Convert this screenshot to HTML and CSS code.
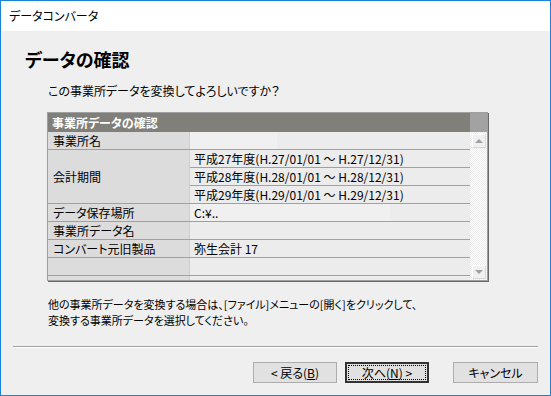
FILE: index.html
```html
<!DOCTYPE html>
<html lang="ja">
<head>
  <meta charset="UTF-8">
  <title>データコンバータ</title>
  <link rel="stylesheet" href="styles.css">
</head>
<body>
  <div class="window">
    <div class="titlebar">データコンバータ</div>

    <div class="content">
      <h1 class="page-title">データの確認</h1>
      <p class="prompt">この事業所データを変換してよろしいですか？</p>

      <div class="data-box">
        <div class="grid">
          <div class="grid-head">事業所データの確認</div>

          <div class="row">
            <div class="label">事業所名</div>
            <div class="value"><span class="edit-blank short"></span></div>
          </div>

          <div class="row group">
            <div class="label">会計期間</div>
            <div class="values">
              <div class="value">平成27年度(H.27/01/01 ～ H.27/12/31)</div>
              <div class="value">平成28年度(H.28/01/01 ～ H.28/12/31)</div>
              <div class="value">平成29年度(H.29/01/01 ～ H.29/12/31)</div>
            </div>
          </div>

          <div class="row">
            <div class="label">データ保存場所</div>
            <div class="value"><span class="edit-text">C:¥..</span></div>
          </div>

          <div class="row">
            <div class="label">事業所データ名</div>
            <div class="value"></div>
          </div>

          <div class="row">
            <div class="label">コンバート元旧製品</div>
            <div class="value">弥生会計 17</div>
          </div>

          <div class="row">
            <div class="label"></div>
            <div class="value"></div>
          </div>

          <div class="row tail">
            <div class="label"></div>
            <div class="value"></div>
          </div>
        </div>

        <div class="scrollbar">
          <div class="scroll-head"></div>
          <div class="scroll-track">
            <div class="scroll-btn"><span class="arrow up"></span></div>
            <div class="scroll-btn"><span class="arrow down"></span></div>
          </div>
        </div>
      </div>

      <p class="note">他の事業所データを変換する場合は、[ファイル]メニューの[開く]をクリックして、<br>変換する事業所データを選択してください。</p>
    </div>

    <div class="separator"></div>

    <div class="buttons">
      <button class="btn">&lt; 戻る(<u>B</u>)</button>
      <button class="btn default"><span class="focus">次へ(<u>N</u>) &gt;</span></button>
      <button class="btn cancel">キャンセル</button>
    </div>
  </div>
</body>
</html>
```

FILE: styles.css
```css
* { box-sizing: border-box; }
body {
  margin: 0;
  font-family: 'Noto Sans CJK JP', 'Noto Sans', sans-serif;
  font-size: 12px;
  font-feature-settings: "palt";
  color: #000;
  background: #fff;
}
.window {
  width: 551px;
  height: 396px;
  border: 1px solid #1883d7;
  background: #efefef;
  display: flex;
  flex-direction: column;
}
.titlebar {
  height: 30px;
  line-height: 30px;
  background: #fff;
  padding-left: 8px;
  font-size: 12px;
}
.content {
  padding: 0 0 0 24px;
}
.page-title {
  margin: 19px 0 0;
  font-size: 18px;
  line-height: 18px;
  font-weight: bold;
}
.prompt {
  margin: 16px 0 0 23px;
  line-height: 14px;
}

/* confirmation table */
.data-box {
  margin: 14px 0 0 22px;
  width: 441px;
  display: flex;
  border: 1px solid #a0a0a0;
  box-shadow: 1px 1px 0 #6a6a6a;
  background: #ececec;
}
.grid {
  flex: 1;
  display: flex;
  flex-direction: column;
}
.grid-head {
  height: 19px;
  line-height: 19px;
  background: #807f79;
  color: #fff;
  font-weight: bold;
  padding-left: 4px;
}
.row {
  display: flex;
  height: 18px;
  border-bottom: 1px solid #a0a0a0;
}
.row.group { height: 54px; }
.row.tail { height: 4px; border-bottom: none; }
.label {
  width: 142px;
  background: #dddcdd;
  border-right: 1px solid #cfcfcf;
  padding-left: 5px;
  line-height: 17px;
  display: flex;
  align-items: center;
}
.values {
  flex: 1;
  display: flex;
  flex-direction: column;
}
.value {
  flex: 1;
  padding-left: 4px;
  line-height: 17px;
  background: #ececec;
  white-space: nowrap;
}
.values .value { border-bottom: 1px solid #a0a0a0; }
.values .value:last-child { border-bottom: none; }
.edit-blank {
  display: inline-block;
  height: 17px;
  vertical-align: top;
  margin-left: -4px;
  background: #f0f0f0;
}
.edit-blank.short { width: 87px; }
.edit-text {
  display: inline-block;
  width: 200px;
  margin-left: -4px;
  padding-left: 4px;
  background: #f0f0f0;
}

/* scrollbar */
.scrollbar {
  width: 17px;
  display: flex;
  flex-direction: column;
}
.scroll-head {
  height: 19px;
  background: #a2a2a2;
}
.scroll-track {
  flex: 1;
  display: flex;
  flex-direction: column;
  justify-content: space-between;
  padding: 2px 1px 1px 2px;
  background: repeating-conic-gradient(#ffffff 0 25%, #ececec 0 50%) 0 0 / 2px 2px;
}
.scroll-btn {
  width: 14px;
  height: 14px;
  background: #f0f0f0;
  border: 1px solid #fff;
  border-right-color: #d8d8d8;
  border-bottom-color: #d8d8d8;
  display: flex;
  align-items: center;
  justify-content: center;
}
.arrow {
  width: 0;
  height: 0;
  border-left: 4px solid transparent;
  border-right: 4px solid transparent;
}
.arrow.up { border-bottom: 4px solid #a0a0a0; }
.arrow.down { border-top: 4px solid #a0a0a0; }

.note {
  margin: 15px 0 0 23px;
  font-size: 11px;
  line-height: 16px;
}

/* footer */
.separator {
  margin: 18px 12px 0;
  height: 2px;
  border-top: 1px solid #a0a0a0;
  border-bottom: 1px solid #fff;
}
.buttons {
  display: flex;
  justify-content: flex-end;
  gap: 8px;
  padding: 14px 12px 0 0;
}
.btn {
  width: 84px;
  height: 21px;
  padding: 0;
  font-family: inherit;
  font-size: 12px;
  font-feature-settings: "palt";
  color: #000;
  background: #e1e1e1;
  border: 1px solid #adadad;
  display: flex;
  align-items: center;
  justify-content: center;
}
.btn.default {
  border: 2px solid #333;
  padding: 1px;
}
.btn.default .focus {
  flex: 1;
  align-self: stretch;
  display: flex;
  align-items: center;
  justify-content: center;
  border: 1px dotted #000;
}
.btn.cancel {
  width: 85px;
  margin-left: 16px;
}
```
